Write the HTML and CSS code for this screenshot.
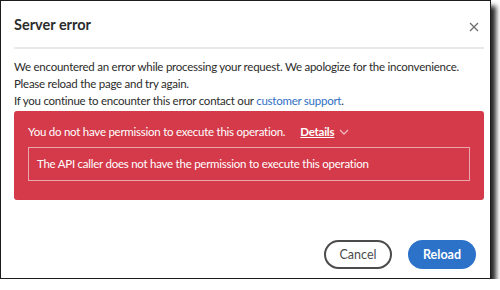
FILE: index.html
```html
<!DOCTYPE html>
<html lang="en">
<head>
  <meta charset="UTF-8" />
  <title>Server error</title>
  <link rel="stylesheet" href="styles.css">
</head>
<body>
  <div class="dialog">
    <header class="dialog-head">
      <h2>Server error</h2>
      <span class="close">
        <svg width="10" height="10" viewBox="0 0 10 10"><path d="M1 1L9 9M9 1L1 9" stroke="#6e6e6e" stroke-width="1.3" fill="none"/></svg>
      </span>
    </header>

    <div class="dialog-body">
      <p>We encountered an error while processing your request. We apologize for the inconvenience.</p>
      <p>Please reload the page and try again.</p>
      <p>If you continue to encounter this error contact our <a href="#">customer support</a>.</p>

      <div class="alert">
        <div class="alert-line">
          <span>You do not have permission to execute this operation.</span>
          <span class="details">Details</span>
          <svg class="chevron" width="10" height="6" viewBox="0 0 10 6"><path d="M1 1L5 5L9 1" stroke="#f3b6bd" stroke-width="1.3" fill="none"/></svg>
        </div>
        <div class="alert-box">The API caller does not have the permission to execute this operation</div>
      </div>
    </div>

    <footer class="dialog-foot">
      <button class="btn btn-cancel">Cancel</button>
      <button class="btn btn-primary">Reload</button>
    </footer>
  </div>
</body>
</html>
```

FILE: styles.css
```css
body {
  margin: 0;
  background: #ffffff;
  font-family: 'Lato', sans-serif;
  color: #2c2c2c;
}

.dialog {
  width: 489px;
  height: 277px;
  border: 1px solid #1c1c1c;
  background: #fff;
  box-shadow: 5px 6px 5px rgba(0, 0, 0, 0.85);
  display: flex;
  flex-direction: column;
}

.dialog-head {
  margin: 0 6px 0 13px;
  height: 45px;
  border-bottom: 2px solid #e9e9e9;
  display: flex;
  align-items: center;
  justify-content: space-between;
  padding-top: 1px;
}

.dialog-head h2 {
  margin: 0;
  font-size: 14.5px;
  font-weight: 700;
  color: #2c2c2c;
}

.close {
  display: flex;
  margin-right: 5px;
  margin-top: 4px;
}

.dialog-body {
  padding: 9px 6px 0 13px;
  font-size: 11.5px;
  letter-spacing: -0.25px;
}

.dialog-body p {
  margin: 0;
  line-height: 17px;
}

.dialog-body a {
  color: #2f6fc4;
  text-decoration: none;
}

.alert {
  background: #d43a49;
  color: #fff;
  border-radius: 3px;
  margin-top: 2px;
  padding: 12px 14px 19px 14px;
}

.alert-line {
  display: flex;
  align-items: center;
  height: 16px;
}

.details {
  font-weight: 700;
  text-decoration: underline;
  margin-left: 15px;
}

.chevron {
  margin-left: 5px;
  margin-top: 1px;
}

.alert-box {
  margin-top: 8px;
  border: 1px solid rgba(255, 255, 255, 0.55);
  padding: 8px 8px 9px 8px;
  line-height: 15px;
}

.dialog-foot {
  margin-top: auto;
  display: flex;
  justify-content: flex-end;
  gap: 16px;
  padding: 0 14px 9px 0;
}

.btn {
  height: 29px;
  width: 68px;
  border-radius: 15px;
  font-family: 'Lato', sans-serif;
  font-size: 12.5px;
  cursor: pointer;
}

.btn-cancel {
  background: #fff;
  border: 2px solid #4b4b4b;
  color: #4b4b4b;
}

.btn-primary {
  background: #2c72c8;
  border: none;
  color: #fff;
  font-weight: 700;
}
```
